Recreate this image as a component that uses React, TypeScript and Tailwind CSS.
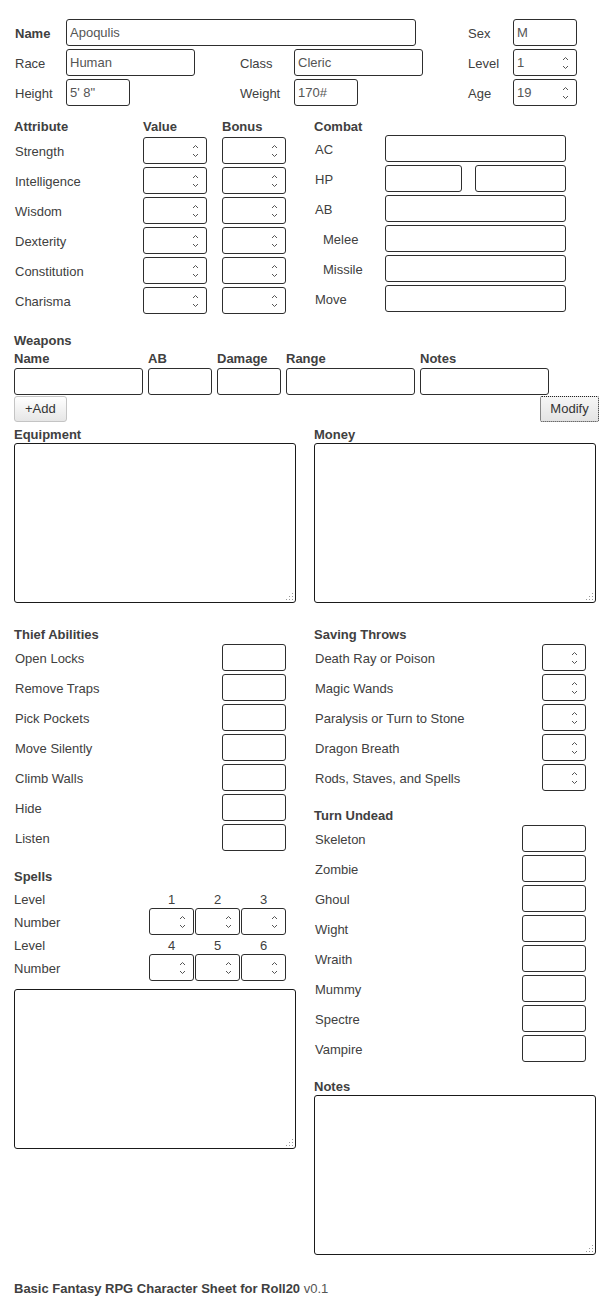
import type { ReactNode } from "react";

const attributes = ["Strength", "Intelligence", "Wisdom", "Dexterity", "Constitution", "Charisma"];
const thief = ["Open Locks", "Remove Traps", "Pick Pockets", "Move Silently", "Climb Walls", "Hide", "Listen"];
const saves = ["Death Ray or Poison", "Magic Wands", "Paralysis or Turn to Stone", "Dragon Breath", "Rods, Staves, and Spells"];
const undead = ["Skeleton", "Zombie", "Ghoul", "Wight", "Wraith", "Mummy", "Spectre", "Vampire"];

export default function App() {
    return (
        <div className="min-h-screen w-full bg-white px-[14px] pt-[19px] pb-[12px] font-['Liberation_Sans',Arial,sans-serif] text-[13px] leading-4 text-[#404040]">
            {/* Name / race / class */}
            <div className="flex flex-col gap-[3px]">
                <div className="flex h-[27px] items-center">
                    <span className="w-[52px] pt-[2px] pl-px font-bold">Name</span>
                    <TextBox className="w-[350px]" value="Apoqulis" />
                    <span className="ml-[52px] w-[45px] pt-[2px]">Sex</span>
                    <TextBox className="w-[64px]" value="M" />
                </div>
                <div className="flex h-[27px] items-center">
                    <span className="w-[52px] pt-[2px] pl-px">Race</span>
                    <TextBox className="w-[129px]" value="Human" />
                    <span className="ml-[45px] w-[54px] pt-[2px]">Class</span>
                    <TextBox className="w-[129px]" value="Cleric" />
                    <span className="ml-[45px] w-[45px] pt-[2px]">Level</span>
                    <NumBox className="w-[64px]" value="1" />
                </div>
                <div className="flex h-[27px] items-center">
                    <span className="w-[52px] pt-[2px] pl-px">Height</span>
                    <TextBox className="w-[64px]" value={`5' 8"`} />
                    <span className="ml-[110px] w-[54px] pt-[2px]">Weight</span>
                    <TextBox className="w-[64px]" value="170#" />
                    <span className="ml-[110px] w-[45px] pt-[2px]">Age</span>
                    <NumBox className="w-[64px]" value="19" />
                </div>
            </div>

            {/* Attributes + combat */}
            <div className="mt-[12px] flex items-start">
                <div className="w-[300px]">
                    <div className="flex h-4 pt-px font-bold">
                        <span className="w-[129px]">Attribute</span>
                        <span className="w-[79px]">Value</span>
                        <span>Bonus</span>
                    </div>
                    <div className="mt-[3px] flex flex-col gap-[3px]">
                        {attributes.map((a) => (
                            <div key={a} className="flex h-[27px] items-center">
                                <span className="w-[129px] pt-[2px] pl-px">{a}</span>
                                <NumBox className="w-[64px]" />
                                <NumBox className="ml-[15px] w-[64px]" />
                            </div>
                        ))}
                    </div>
                </div>
                <div>
                    <div className="h-4 pt-px font-bold">Combat</div>
                    <div className="mt-px flex flex-col gap-[3px]">
                        <Row label="AC"><TextBox className="w-[181px]" /></Row>
                        <Row label="HP">
                            <TextBox className="w-[77px]" />
                            <TextBox className="ml-[13px] w-[91px]" />
                        </Row>
                        <Row label="AB"><TextBox className="w-[181px]" /></Row>
                        <Row label="Melee" indent><TextBox className="w-[181px]" /></Row>
                        <Row label="Missile" indent><TextBox className="w-[181px]" /></Row>
                        <Row label="Move"><TextBox className="w-[181px]" /></Row>
                    </div>
                </div>
            </div>

            {/* Weapons */}
            <div className="mt-[18px] h-4 pt-px font-bold">Weapons</div>
            <div className="mt-[2px] flex h-4 pt-px font-bold">
                <span className="w-[134px]">Name</span>
                <span className="w-[69px]">AB</span>
                <span className="w-[69px]">Damage</span>
                <span className="w-[134px]">Range</span>
                <span>Notes</span>
            </div>
            <div className="mt-[2px] flex gap-[5px]">
                <TextBox className="w-[129px]" />
                <TextBox className="w-[64px]" />
                <TextBox className="w-[64px]" />
                <TextBox className="w-[129px]" />
                <TextBox className="w-[129px]" />
            </div>
            <div className="mt-px flex w-[585px] justify-between">
                <button className="h-[26px] rounded-[3px] border border-[#c4c4c4] bg-gradient-to-b from-white to-[#e6e6e6] px-[10px] text-[13px] text-[#333]">
                    +Add
                </button>
                <button className="h-[26px] w-[59px] rounded-[2px] border border-dotted border-[#222] bg-gradient-to-b from-[#f6f6f6] to-[#e4e4e4] text-[13px] text-[#333]">
                    Modify
                </button>
            </div>

            {/* Equipment / money */}
            <div className="mt-[4px] flex">
                <div className="w-[300px]">
                    <div className="h-4 pt-px font-bold">Equipment</div>
                    <Area className="mt-px" />
                </div>
                <div>
                    <div className="h-4 pt-px font-bold">Money</div>
                    <Area className="mt-px" />
                </div>
            </div>

            {/* Thief + spells / saves + undead + notes */}
            <div className="mt-[23px] flex items-start">
                <div className="w-[300px]">
                    <div className="h-4 pt-px font-bold">Thief Abilities</div>
                    <div className="mt-[2px] flex w-[272px] flex-col gap-[3px]">
                        {thief.map((t) => (
                            <div key={t} className="flex h-[27px] items-center justify-between">
                                <span className="pt-[2px] pl-px">{t}</span>
                                <TextBox className="w-[64px]" />
                            </div>
                        ))}
                    </div>

                    <div className="mt-[17px] h-4 pt-px font-bold">Spells</div>
                    <div className="mt-[5px]">
                        <SpellLevels levels={["1", "2", "3"]} />
                        <SpellLevels levels={["4", "5", "6"]} />
                    </div>
                    <Area className="mt-[8px]" />
                </div>

                <div>
                    <div className="h-4 pt-px font-bold">Saving Throws</div>
                    <div className="mt-[2px] flex w-[272px] flex-col gap-[3px]">
                        {saves.map((s) => (
                            <div key={s} className="flex h-[27px] items-center justify-between">
                                <span className="pt-[2px] pl-px">{s}</span>
                                <NumBox className="w-[44px]" />
                            </div>
                        ))}
                    </div>

                    <div className="mt-[16px] h-4 pt-px font-bold">Turn Undead</div>
                    <div className="mt-[2px] flex w-[272px] flex-col gap-[3px]">
                        {undead.map((u) => (
                            <div key={u} className="flex h-[27px] items-center justify-between">
                                <span className="pt-[2px] pl-px">{u}</span>
                                <TextBox className="w-[64px]" />
                            </div>
                        ))}
                    </div>

                    <div className="mt-[16px] h-4 pt-px font-bold">Notes</div>
                    <Area className="mt-px" />
                </div>
            </div>

            {/* Footer */}
            <p className="mt-[25px] h-4 pt-px">
                <span className="font-bold">Basic Fantasy RPG Character Sheet for Roll20</span>
                <span className="text-[#555]"> v0.1</span>
            </p>
        </div>
    );
}

function Row({ label, indent, children }: { label: string; indent?: boolean; children: ReactNode }) {
    return (
        <div className="flex h-[27px] items-center">
            <span className={indent ? "w-[71px] pt-[2px] pl-[9px]" : "w-[71px] pt-[2px] pl-px"}>{label}</span>
            {children}
        </div>
    );
}

function SpellLevels({ levels }: { levels: string[] }) {
    return (
        <>
            <div className="flex h-[19px] items-center gap-px">
                <span className="w-[134px] pt-[2px]">Level</span>
                {levels.map((l) => (
                    <span key={l} className="w-[45px] pt-[2px] text-center">{l}</span>
                ))}
            </div>
            <div className="flex h-[27px] items-center gap-px">
                <span className="w-[134px] pt-[2px]">Number</span>
                {levels.map((l) => (
                    <NumBox key={l} className="w-[45px]" />
                ))}
            </div>
        </>
    );
}

function TextBox({ className, value }: { className: string; value?: string }) {
    return (
        <input
            type="text"
            defaultValue={value}
            className={`h-[27px] rounded-[3px] border border-[#2e2e2e] bg-white px-[3px] text-[13px] text-[#555] outline-none ${className}`}
        />
    );
}

function NumBox({ className, value }: { className: string; value?: string }) {
    return (
        <div className={`flex h-[27px] items-center rounded-[3px] border border-[#2e2e2e] bg-white ${className}`}>
            <input
                type="text"
                defaultValue={value}
                className="h-full w-full min-w-0 bg-transparent pl-[3px] text-[13px] text-[#555] outline-none"
            />
            <svg width="7" height="16" viewBox="0 0 7 16" className="mr-[7px] shrink-0">
                <polyline points="1,5 3.5,2.5 6,5" fill="none" stroke="#555" strokeWidth="1" />
                <polyline points="1,11 3.5,13.5 6,11" fill="none" stroke="#555" strokeWidth="1" />
            </svg>
        </div>
    );
}

function Area({ className }: { className: string }) {
    return (
        <div className={`relative h-[160px] w-[282px] ${className}`}>
            <textarea className="h-full w-full resize-none rounded-[3px] border border-[#1a1a1a] bg-white outline-none" />
            {/* resize grip */}
            <svg width="9" height="9" viewBox="0 0 9 9" className="absolute right-[2px] bottom-[2px]">
                <rect x="7" y="1" width="1" height="1" fill="#999" />
                <rect x="4" y="4" width="1" height="1" fill="#999" />
                <rect x="7" y="4" width="1" height="1" fill="#999" />
                <rect x="1" y="7" width="1" height="1" fill="#999" />
                <rect x="4" y="7" width="1" height="1" fill="#999" />
                <rect x="7" y="7" width="1" height="1" fill="#999" />
            </svg>
        </div>
    );
}
